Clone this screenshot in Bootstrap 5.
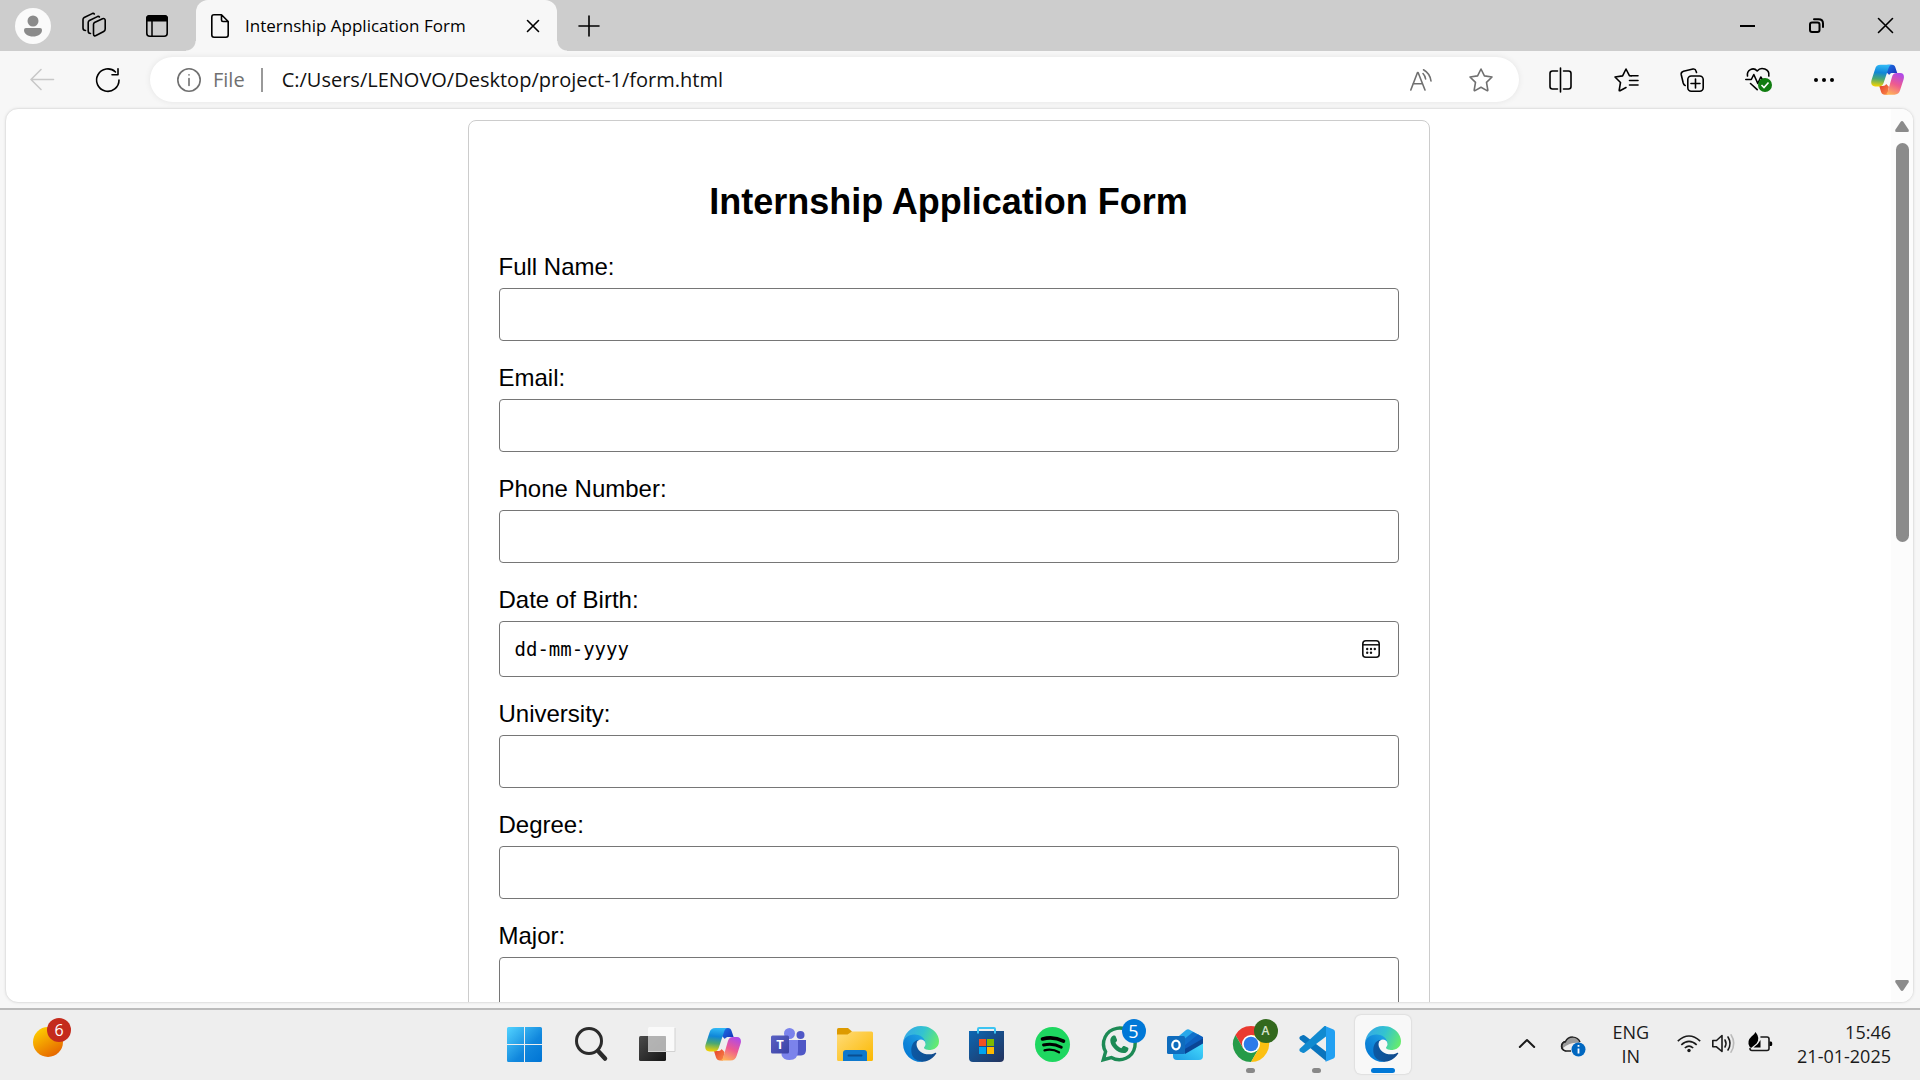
<!DOCTYPE html>
<html lang="en">
<head>
<meta charset="utf-8">
<meta name="viewport" content="width=device-width, initial-scale=1">
<title>Internship Application Form</title>
<link rel="stylesheet" href="https://cdn.jsdelivr.net/npm/bootstrap@5.3.0/dist/css/bootstrap.min.css">
<style>
  body { font-family: "Open Sans", "Noto Sans", sans-serif; background: #f7f7f7; color: #000; }
  button { border: 0; background: transparent; padding: 0; color: inherit; display: flex; align-items: center; justify-content: center; flex: none; }
  svg { display: block; overflow: visible; flex: none; }
  .ln { fill: none; stroke: currentColor; stroke-width: 1.6; stroke-linecap: round; stroke-linejoin: round; }
  .ln.bold-line { stroke-width: 2; }

  /* tab strip */
  .tabstrip { height: 51px; background: #cdcdcd; }
  .avatar { width: 36px; height: 36px; background: #fafafa; border-radius: 50%; margin: 0 11px 0 15px; }
  .strip-btn { width: 63px; height: 51px; }
  .browser-tab { width: 361px; height: 51px; margin-left: 8px; padding: 0 15px; background: #f7f7f7; border-radius: 12px 12px 0 0; position: relative; font-size: 17px; }
  .browser-tab::before, .browser-tab::after { content: ""; position: absolute; bottom: 0; width: 10px; height: 10px; }
  .browser-tab::before { left: -10px; background: radial-gradient(circle at 0 0, transparent 9px, #f7f7f7 10px); }
  .browser-tab::after { right: -10px; background: radial-gradient(circle at 100% 0, transparent 9px, #f7f7f7 10px); }
  .win-btn { width: 69px; height: 51px; }

  /* toolbar */
  .toolbar { height: 57px; padding: 0 3px 0 9px; }
  .tool-btn { width: 66px; height: 46px; }
  .tool-btn.copilot-btn { width: 60px; }
  .tool-btn.off { color: #c8c8c8; }
  .address { height: 45px; margin-left: 9px; padding-left: 27px; padding-right: 8px; background: #fff; border-radius: 23px; box-shadow: 0 0 6px rgba(0,0,0,.08); color: #707070; font-size: 20px; }
  .address-btn { width: 60px; }
  .address-split { width: 2px; height: 24px; background: #999; margin: 0 19px 0 16px; }
  .address input { border: 0; outline: 0; padding: 0; background: transparent; color: #111; font-size: 20px; }

  /* page */
  .viewport { margin: 0 6px 5px 5px; border: 1px solid #e3e3e3; border-radius: 13px; background: #fff; box-shadow: 0 0 3px rgba(0,0,0,.08); }
  .page { padding-top: 11px; font-family: "Liberation Sans", Arial, sans-serif; font-size: 24px; line-height: 28px; }
  .form-box { max-width: 962px; padding: 30px; border: 1px solid #ccc; border-radius: 8px; }
  .form-box h1 { font-size: 36px; line-height: 42px; font-weight: 700; margin: 30px 0; }
  .form-box label { display: block; margin-bottom: 7px; }
  .field { margin-bottom: 23px; }
  .field .form-control { height: 53px; padding: 12px 15px; border: 1px solid #767676; border-radius: 4px; color: #000; box-shadow: none; }
  .field .date-input { height: 56px; font-family: "DejaVu Sans Mono", monospace; font-size: 19px; }
  .date-input::placeholder { color: #000; opacity: 1; }
  .date-pick { position: absolute; right: 19px; top: 19px; }
  .scroll-rail { width: 22px; background: #fcfcfc; padding: 12px 0 11px; flex: none; }
  .scroll-thumb { width: 13px; height: 399px; border-radius: 7px; background: #8b8b8b; margin-top: 11px; }

  /* taskbar */
  .taskbar { height: 72px; border-top: 2px solid #bbb; background: #eee; display: grid; grid-template-columns: 1fr auto 1fr; padding-right: 13px; color: #1a1a1a; }
  .app { width: 66px; height: 70px; position: relative; padding-bottom: 2px; }
  .app.current::before { content: ""; position: absolute; inset: 5px 5px 6px; background: #f8f8f8; border-radius: 6px; box-shadow: 0 0 2px rgba(0,0,0,.2); }
  .app svg { position: relative; }
  .app.running::after { content: ""; position: absolute; bottom: 7px; width: 9px; height: 5px; border-radius: 3px; background: #888; }
  .app.current::after { content: ""; position: absolute; bottom: 7px; width: 24px; height: 5px; border-radius: 3px; background: #0078d7; }
  .count { position: absolute; width: 24px; height: 24px; border-radius: 50%; color: #fff; font-size: 16px; line-height: 24px; text-align: center; }
  .widget { position: relative; width: 30px; height: 30px; margin: 17px 0 0 33px; }
  .widget .count { left: 14px; top: -9px; background: #c42b1c; }
  .count.blue { left: 36px; top: 9px; background: #0078d7; font-size: 18px; }
  .count.green { left: 36px; top: 9px; background: #33691e; font-size: 12px; font-weight: 600; color: #d5e3cd; }
  .tray { padding-right: 16px; font-size: 18px; line-height: 24px; padding-bottom: 3px; }
  .tray-cloud { margin: 4px 26px 0; }
  .tray-wifi { margin: 0 11px 0 28px; }
  .tray-battery { margin: 0 24px 4px 12px; }
</style>
</head>
<body class="d-flex flex-column vh-100 overflow-hidden">

<svg width="0" height="0" class="position-absolute" aria-hidden="true">
  <defs>
    <linearGradient id="e1" x1="0" y1="0" x2="1" y2="0"><stop offset="0" stop-color="#0c59a4"/><stop offset="1" stop-color="#114a8b"/></linearGradient>
    <linearGradient id="e2" x1=".8" y1=".2" x2=".2" y2="1"><stop offset="0" stop-color="#1b9de2"/><stop offset=".5" stop-color="#0f84d8"/><stop offset="1" stop-color="#0078d4"/></linearGradient>
    <linearGradient id="e3" x1="0" y1=".3" x2="1" y2=".6"><stop offset="0" stop-color="#35a7e8"/><stop offset=".5" stop-color="#33c3d0"/><stop offset="1" stop-color="#66eb6e"/></linearGradient>
    <symbol id="edge" viewBox="0 0 256 256">
      <path fill="url(#e2)" d="M105.7 241.4A79.2 79.2 0 0 1 83 220.1 80.7 80.7 0 0 1 112.5 99.5c3.1-1.5 8.5-4.1 15.5-4a32.4 32.4 0 0 1 25.7 13 31.9 31.9 0 0 1 6.4 18.7c0-.2 24.4-79.6-80-79.6C36.2 47.6.1 89.2.1 125.8a130 130 0 0 0 12.1 56 128 128 0 0 0 156.4 67.1 75.5 75.5 0 0 1-62.8-8Z"/>
      <path fill="url(#e1)" d="M231 190.5c-3.4 1.8-6.9 3.4-10.5 4.7a102 102 0 0 1-35.9 6.4c-47.3 0-88.5-32.5-88.5-74.3a31.5 31.5 0 0 1 16.5-27.8C69.8 101.3 58.8 145.9 58.8 172c0 73.9 68.1 81.4 82.8 81.4 7.900 0 19.8-2.3 27-4.6l1.3-.4a128 128 0 0 0 66.6-52.8 4 4 0 0 0-5.5-5.1Z"/>
      <path fill="url(#e3)" d="M152.3 148.9c-.8 1-3.3 2.5-3.3 5.6 0 2.6 1.7 5.1 4.7 7.2 14.4 10 41.5 8.7 41.6 8.7a59.6 59.6 0 0 0 30.2-8.3A61.4 61.4 0 0 0 256 109.200c.3-22.4-8-37.3-11.3-43.900C223.5 23.800 177.7 0 128 0A128 128 0 0 0 0 126.2c.5-36.5 36.8-66 80-66 3.5 0 23.5.3 42 10 16.3 8.6 24.9 19 30.8 29.2 6.2 10.7 7.3 24.2 7.3 29.5s-2.7 13.4-7.8 20Z"/>
    </symbol>
    <linearGradient id="c1" x1=".4" y1="0" x2=".3" y2="1"><stop offset="0" stop-color="#30b8f5"/><stop offset=".35" stop-color="#0f86d8"/><stop offset=".65" stop-color="#4aa873"/><stop offset="1" stop-color="#f5d300"/></linearGradient>
    <linearGradient id="c2" x1=".7" y1="0" x2=".3" y2="1"><stop offset="0" stop-color="#b04ae8"/><stop offset=".5" stop-color="#ee5a90"/><stop offset="1" stop-color="#ffb357"/></linearGradient>
    <linearGradient id="c3" x1="0" y1="0" x2="1" y2="1"><stop offset="0" stop-color="#1f73e8"/><stop offset="1" stop-color="#1431b5"/></linearGradient>
    <linearGradient id="c4" x1="0" y1="0" x2="1" y2="1"><stop offset="0" stop-color="#e23c2e"/><stop offset="1" stop-color="#fb8a45"/></linearGradient>
    <symbol id="copilot" viewBox="0 0 36 36">
      <path fill="url(#c3)" d="M18 2h5c2 0 3 1 3.600 3l2 6h-5c-1.800 0-3 .6-3.700 2l-3-3Z"/>
      <path fill="url(#c4)" d="M18 34.500h-3c-2 0-3.300-1-4-3l-2-6.500h4c1.700 0 2.900-.6 3.600-2l2.900 3Z"/>
      <path fill="url(#c1)" d="M10.500 2H23c-2 0-3.200 1.500-4 4l-4.800 14.500C13.200 24 12 25.500 9 25.500H4.500C.8 25.500-.5 22.500.6 18.600L4.500 6.500C5.400 3.500 7 2 10.500 2Z"/>
      <path fill="url(#c2)" d="M25.500 34.500H14.500c2 0 3.200-1.500 4-4L22.800 15.500c1-3.200 2.300-4.600 5.200-4.600h4c3.500 0 4.600 3 3.600 6.700L31.700 29.800c-1 3.200-2.700 4.700-6.200 4.700Z"/>
    </symbol>
    <linearGradient id="w2" gradientUnits="userSpaceOnUse" x1="0" y1="0" x2="35" y2="35"><stop offset="0" stop-color="#52d3ff"/><stop offset=".6" stop-color="#1187dd"/><stop offset="1" stop-color="#0074d4"/></linearGradient>
    <linearGradient id="tv" x1="0" y1="0" x2="1" y2="1"><stop offset="0" stop-color="#4c4c4c"/><stop offset="1" stop-color="#151515"/></linearGradient>
    <linearGradient id="fx" x1="0" y1="0" x2="1" y2="1"><stop offset="0" stop-color="#ffdc7a"/><stop offset="1" stop-color="#fbb800"/></linearGradient>
    <linearGradient id="st" x1="0" y1="0" x2="1" y2="1"><stop offset="0" stop-color="#0c67b3"/><stop offset="1" stop-color="#24325c"/></linearGradient>
    <linearGradient id="wd" x1=".2" y1="0" x2=".8" y2="1"><stop offset="0" stop-color="#ffd100"/><stop offset="1" stop-color="#e45f00"/></linearGradient>
    <linearGradient id="ol" x1="0" y1="1" x2="1" y2="0"><stop offset="0" stop-color="#1a9be5"/><stop offset="1" stop-color="#4be1ff"/></linearGradient>
    <linearGradient id="tm" x1="0" y1="0" x2="1" y2="1"><stop offset="0" stop-color="#5a62c3"/><stop offset="1" stop-color="#3a41a5"/></linearGradient>
  </defs>
</svg>

<header class="tabstrip d-flex align-items-center flex-shrink-0">
  <button class="avatar" aria-label="Profile"><svg width="18" height="22" viewBox="0 0 18 22" fill="#8b8b8b"><circle cx="9" cy="6" r="5.500"/><path d="M2 13h14q2 0 2 2c0 4-4 6.500-9 6.500S0 19 0 15q0-2 2-2Z"/></svg></button>
  <button class="strip-btn" aria-label="Workspaces"><svg class="ln" width="24" height="25" viewBox="0 0 24 25"><path d="M12.500 9.500 20.500 5.700Q23.200 5 23.200 7.500V16q0 1.700-1.500 2.500l-7.200 3.700Q11.500 24 11.500 20.800V11.500q0-1.300 1-2ZM8.500 20.500Q6.200 20.500 6.200 18V9.500q0-1.300 1.200-2l8-3.900q1.400-.6 2 .4M3.500 17.500Q1 17.500 1 15V6.500q0-1.300 1.200-2l8-3.900Q11.600 0 12.300 1"/></svg></button>
  <button class="strip-btn" aria-label="Tab actions"><svg width="22" height="22" viewBox="0 0 22 22"><rect class="ln" x=".8" y=".8" width="20.400" height="20.400" rx="3"/><path d="M0 6.500V3.500Q0 0 3.500 0h15Q22 0 22 3.500v3Z"/><path d="M6 6v15" stroke="#000" stroke-width="1.500"/></svg></button>
  <div class="browser-tab d-flex align-items-center">
    <svg class="ln" width="18" height="24" viewBox="0 0 18 24"><path d="M3 .8h7.500L17.200 7.500V21q0 2.200-2.200 2.200H3Q.8 23.200.8 21V3Q.8.8 3 .8ZM10.500.8V6q0 1.500 1.500 1.500h5.200"/></svg>
    <span class="flex-grow-1 text-nowrap ps-3">Internship Application Form</span>
    <button aria-label="Close tab"><svg class="ln" width="18" height="12" viewBox="0 0 18 12"><path d="m3.500.5 11 11M14.500.5l-11 11"/></svg></button>
  </div>
  <button class="strip-btn" aria-label="New tab"><svg class="ln" width="22" height="22" viewBox="0 0 22 22"><path d="M11 1v20M1 11h20"/></svg></button>
  <div class="d-flex ms-auto">
    <button class="win-btn" aria-label="Minimize"><svg width="15" height="2"><path d="M0 1h15" stroke="#000" stroke-width="2"/></svg></button>
    <button class="win-btn" aria-label="Restore"><svg class="ln bold-line" width="15" height="15" viewBox="0 0 15 15"><rect x="1" y="4.500" width="9.500" height="9.500" rx="2"/><path d="M5 1.200H9.500Q14 1.200 14 5.500V9"/></svg></button>
    <button class="win-btn" aria-label="Close"><svg class="ln" width="15" height="15" viewBox="0 0 15 15"><path d="m.5.5 14 14M14.500.5l-14 14"/></svg></button>
  </div>
</header>

<nav class="toolbar d-flex align-items-center flex-shrink-0">
  <button class="tool-btn off" aria-label="Back" disabled><svg class="ln" width="24" height="21" viewBox="0 0 24 21"><path d="M23.500 10.500H1M11 .5l-10 10 10 10"/></svg></button>
  <button class="tool-btn" aria-label="Refresh"><svg class="ln" width="24" height="24" viewBox="0 0 24 24"><path d="M23 12A11.200 11.200 0 1 1 19.500 4M22 .8V6.800H16"/></svg></button>
  <div class="address d-flex align-items-center flex-grow-1">
    <svg class="ln" width="24" height="24" viewBox="0 0 24 24"><circle cx="12" cy="12" r="11.200"/><path d="M12 10.500v7M12 6.800v.2"/></svg>
    <label for="url" class="ps-2 ms-1">File</label>
    <span class="address-split"></span>
    <input id="url" class="flex-grow-1" type="text" value="C:/Users/LENOVO/Desktop/project-1/form.html">
    <button class="address-btn" aria-label="Read aloud"><svg class="ln" width="22" height="22" viewBox="0 0 22 22"><path d="M.8 21 7.500 3.500h.6L15 21M3 14.800h9.600M13 4.500q2.200 2.300 2.600 5.500M13.500.8Q20 4.500 21 12"/></svg></button>
    <button class="address-btn" aria-label="Favorite"><svg class="ln" width="24" height="24" viewBox="0 0 24 24"><path d="m12 1 3.400 6.900 7.600 1.100-5.500 5.400 1.300 7.600q.1 1-.8.600L12 19.300l-6 3.300q-.9.400-.8-.6l1.300-7.600L1 9l7.600-1.100Z"/></svg></button>
  </div>
  <div class="d-flex ms-2">
    <button class="tool-btn" aria-label="Split screen"><svg class="ln" width="23" height="24" viewBox="0 0 23 24"><path d="M8.500 3H3.500Q1 3 1 5.500v13Q1 21 3.500 21h5M14.500 3h5Q22 3 22 5.500v13Q22 21 19.500 21h-5M11.500 0v24"/></svg></button>
    <button class="tool-btn" aria-label="Favorites"><svg class="ln" width="24" height="24" viewBox="0 0 24 24"><path d="M12 19.500 6 22.700q-.9.400-.8-.6l1.300-7.600L1 9l7.600-1.100L12 1l3.400 6.600 2 .4M15.500 12.500H24M15.500 17H24M17.500 7.800H24"/></svg></button>
    <button class="tool-btn" aria-label="Collections"><svg class="ln" width="24" height="24" viewBox="0 0 24 24"><rect x="7.800" y="8" width="15.400" height="15.200" rx="3.500"/><path d="M15.500 11v9M11 15.500h9M16.500 4.500 16 3Q15.500.6 13 1L3.500 3.200Q.8 4 1.200 6.500l2 8.500q.6 2 2 2.500"/></svg></button>
    <button class="tool-btn" aria-label="Browser essentials"><svg width="27" height="25" viewBox="0 0 27 25"><path class="ln" d="M2.500 9C1.500 3.500 8-.8 12.200 4 16-.8 25 2 23.800 9M.8 12.500h5.500l2.500-5 4 9 3-6.500 1.500 2.500h2M5.500 16.500l6.700 6.200"/><circle cx="20" cy="18" r="7" fill="#107c10"/><path d="m16.500 18 2.500 2.500 4.500-5" fill="none" stroke="#fff" stroke-width="1.600"/></svg></button>
    <button class="tool-btn" aria-label="Settings and more"><svg width="20" height="4" viewBox="0 0 20 4"><circle cx="2" cy="2" r="2"/><circle cx="10" cy="2" r="2"/><circle cx="18" cy="2" r="2"/></svg></button>
    <button class="tool-btn copilot-btn" aria-label="Copilot"><svg width="33" height="33"><use href="#copilot"/></svg></button>
  </div>
</nav>

<main class="viewport d-flex flex-grow-1 overflow-hidden">
  <div class="page flex-grow-1 overflow-hidden">
    <form class="form-box mx-auto">
      <h1 class="text-center">Internship Application Form</h1>
      <div class="field"><label for="name">Full Name:</label><input class="form-control" type="text" id="name"></div>
      <div class="field"><label for="email">Email:</label><input class="form-control" type="email" id="email"></div>
      <div class="field"><label for="phone">Phone Number:</label><input class="form-control" type="tel" id="phone"></div>
      <div class="field"><label for="dob">Date of Birth:</label>
        <div class="position-relative">
          <input class="form-control date-input" type="text" id="dob" placeholder="dd-mm-yyyy">
          <button type="button" class="date-pick" aria-label="Show date picker"><svg width="18" height="18" viewBox="0 0 18 18"><rect x=".8" y=".8" width="16.400" height="16.400" rx="3" fill="none" stroke="#111" stroke-width="1.600"/><path d="M1 4.800h16" stroke="#111" stroke-width="1.500"/><g fill="#111"><circle cx="5.200" cy="9" r="1.200"/><circle cx="9" cy="9" r="1.200"/><circle cx="12.800" cy="9" r="1.200"/><circle cx="5.200" cy="12.800" r="1.200"/><circle cx="9" cy="12.800" r="1.200"/></g></svg></button>
        </div>
      </div>
      <div class="field"><label for="uni">University:</label><input class="form-control" type="text" id="uni"></div>
      <div class="field"><label for="degree">Degree:</label><input class="form-control" type="text" id="degree"></div>
      <div class="field"><label for="major">Major:</label><input class="form-control" type="text" id="major"></div>
    </form>
  </div>
  <div class="scroll-rail d-flex flex-column align-items-center">
    <svg width="14" height="11" viewBox="0 0 14 11"><path fill="#8b8b8b" d="M5.500 1q1.500-1.800 3 0l5 7.500q1 2.500-1 2.500h-11q-2 0-1-2.500Z"/></svg>
    <div class="scroll-thumb"></div>
    <svg class="mt-auto" width="14" height="11" viewBox="0 0 14 11"><path fill="#8b8b8b" d="M5.500 10q1.500 1.800 3 0l5-7.500q1-2.500-1-2.500h-11q-2 0-1 2.500Z"/></svg>
  </div>
</main>

<footer class="taskbar flex-shrink-0">
  <div>
    <button class="widget" aria-label="Widgets"><svg width="30" height="30"><circle cx="15" cy="15" r="15" fill="url(#wd)"/></svg><span class="count">6</span></button>
  </div>
  <div class="d-flex">
    <button class="app" aria-label="Start"><svg width="35" height="35" viewBox="0 0 35 35" fill="url(#w2)"><path d="M1.500 0H17v17H0V1.500Q0 0 1.500 0ZM18 0h15.500Q35 0 35 1.500V17H18ZM0 18h17v17H1.500Q0 35 0 33.500ZM18 18h17v15.500q0 1.500-1.500 1.500H18Z"/></svg></button>
    <button class="app" aria-label="Search"><svg width="32" height="34" viewBox="0 0 32 34" fill="none" stroke="#2b2b2b" stroke-linecap="round"><circle cx="14" cy="14" r="12.500" stroke-width="3"/><path d="m24 25 6 6.500" stroke-width="4.500"/></svg></button>
    <button class="app" aria-label="Task view"><svg width="36" height="34" viewBox="0 0 36 34"><rect y="9" width="27" height="25" rx="1.500" fill="url(#tv)"/><rect x="9" width="27" height="25" rx="1.500" fill="#fff" fill-opacity=".72"/><path d="M9 9h18v16H9Z" fill="#a5a5a5" fill-opacity=".6"/><path d="M36 1v23.500H9" fill="none" stroke="#d2d2d2"/></svg></button>
    <button class="app" aria-label="Copilot"><svg width="36" height="36"><use href="#copilot"/></svg></button>
    <button class="app" aria-label="Teams"><svg width="36" height="32" viewBox="0 0 36 32"><circle cx="29.500" cy="7" r="4" fill="#4f57c6"/><path fill="#4f57c6" d="M26 12h9v10q0 5-5 5.500h-4Z"/><circle cx="18.500" cy="5.500" r="5.500" fill="#7b83eb"/><path fill="#7b83eb" d="M12 12h15v11q0 9-8.500 9-6.500 0-8-5Z"/><rect y="7.500" width="18" height="18" rx="1.500" fill="url(#tm)"/><text x="9" y="21" fill="#fff" font-size="13" font-weight="700" text-anchor="middle">T</text></svg></button>
    <button class="app" aria-label="File Explorer"><svg width="36" height="33" viewBox="0 0 36 33"><path fill="#dd9a00" d="M1.500 0H11l4 3.500L12 7H0V1.500Q0 0 1.500 0Z"/><path fill="url(#fx)" d="M0 6.500h10.500L15 3.500h19.500Q36 3.500 36 5v26.500q0 1.500-1.500 1.500h-33Q0 33 0 31.500Z"/><path fill="#0f78cc" d="M6 33V25q0-3 3-3h18q3 0 3 3v8Z"/><rect x="10.500" y="26.500" width="15" height="2" rx="1" fill="#0a4f92"/></svg></button>
    <button class="app" aria-label="Edge"><svg width="36" height="36"><use href="#edge"/></svg></button>
    <button class="app" aria-label="Store"><svg width="35" height="35" viewBox="0 0 35 35"><path fill="none" stroke="#3cc4f2" stroke-width="2" d="M9 6.500V2q0-1 1-1h15q1 0 1 1v4.500"/><path fill="url(#st)" d="M0 4h35v27q0 4-4 4H4q-4 0-4-4Z"/><path fill="none" stroke="#3cc4f2" stroke-width="2" d="M9 6.500V3M26 6.500V3"/><path fill="#f25022" d="M10 12h7v7h-7z"/><path fill="#7fba00" d="M18 12h7v7h-7z"/><path fill="#00a4ef" d="M10 20h7v7h-7z"/><path fill="#ffb900" d="M18 20h7v7h-7z"/></svg></button>
    <button class="app" aria-label="Spotify"><svg width="35" height="35" viewBox="0 0 35 35"><circle cx="17.500" cy="17.500" r="17.500" fill="#1ed760"/><path fill="none" stroke="#000" stroke-linecap="round" d="M7.500 12q11-3 21 2.200" stroke-width="3.600"/><path fill="none" stroke="#000" stroke-linecap="round" d="M8.500 18q9.500-2.400 17.800 2.200" stroke-width="2.900"/><path fill="none" stroke="#000" stroke-linecap="round" d="M9.500 23.300q8-1.800 14.500 2" stroke-width="2.300"/></svg></button>
    <button class="app" aria-label="WhatsApp"><svg width="36" height="36" viewBox="0 0 36 36"><path fill="none" stroke="#1d8a55" stroke-width="3.400" d="M2.300 33.700 4.600 25.700A15.800 15.800 0 1 1 10.300 31.500Z"/><path fill="#1d8a55" d="M13.200 9.500c.8 0 1.200.3 1.500 1l1.300 3.300c.2.600 0 1-.3 1.400l-1.300 1.600c1.300 2.400 3.200 4.200 5.900 5.400l1.700-1.900c.4-.5.800-.5 1.300-.3l3.300 1.600c.6.300.9.600.8 1.300-.3 2.600-2.400 4.200-4.800 4.200-6 0-13.300-6.800-13.300-12.600 0-2.300 1.500-5 3.900-5Z"/></svg><span class="count blue">5</span></button>
    <button class="app" aria-label="Outlook"><svg width="36" height="31" viewBox="0 0 36 31"><path fill="#28a8ea" d="M6 12 19 1q2-1.500 4 0l11 6 2 3v15H6Z"/><path fill="#1070cb" d="M10 16 26 3l6 3-16 16Z"/><path fill="url(#ol)" d="M16 24 36 12v15q0 4-4 4H10q-4 0-4-4v-3Z"/><path fill="#0d5fbe" d="M17 17 31 5.500 36 8v3L18 22Z"/><path fill="#0a4595" d="m17 20.500 19-11v5L18 25Z"/><rect y="7" width="18" height="18" rx="1.500" fill="#0f6cbd"/><ellipse cx="9" cy="16" rx="3.700" ry="4.300" fill="none" stroke="#fff" stroke-width="2.300"/></svg></button>
    <button class="app running" aria-label="Chrome"><svg width="36" height="36" viewBox="0 0 36 36"><path fill="#ea3a30" d="M2.400 9A18 18 0 0 1 33.600 9H18l-7.800 13.500Z"/><path fill="#259b48" d="M2.400 9A18 18 0 0 0 18 36l7.800-13.500H10.200Z"/><path fill="#fcc012" d="M18 36A18 18 0 0 0 33.600 9H18l7.800 13.500Z"/><circle cx="18" cy="18" r="9" fill="#fff"/><circle cx="18" cy="18" r="7.300" fill="#2c7bea"/></svg><span class="count green">A</span></button>
    <button class="app running" aria-label="Visual Studio Code"><svg width="36" height="36" viewBox="0 0 36 36"><path fill="#0a74bd" d="M1 10.500 4 9q1-.2 1.800.4L27 25.500V35L1 13.500Q-.5 12 1 10.500Z"/><path fill="#118ad0" d="M1 25.500 4 27q1 .2 1.800-.4L27 10.500V0h-1.500L1 22.500Q-.5 24 1 25.500Z"/><path fill="#22a0f2" d="m26 0 8.500 3.500Q36 4.200 36 6v24q0 1.800-1.500 2.500L26 36q1-.5 1-2V2q0-1.500-1-2Z"/></svg></button>
    <button class="app current" aria-label="Edge, active window"><svg width="36" height="36"><use href="#edge"/></svg></button>
  </div>
  <div class="tray d-flex align-items-center justify-content-end text-nowrap">
    <svg class="ln bold-line" width="16" height="9" viewBox="0 0 16 9"><path d="m.8 8 7.200-7 7.200 7"/></svg>
    <svg class="tray-cloud" width="25" height="22" viewBox="0 0 25 22"><path fill="#9b9b9b" stroke="#222" stroke-width="1.500" d="M5.500 16A4.800 4.800 0 0 1 4.500 6.500 8 8 0 0 1 19 7"/><path fill="#eee" d="M2 13q7-6 17-5l-7 9H6Z"/><path fill="none" stroke="#222" stroke-width="1.500" d="M5 6.500A4.700 4.700 0 0 0 5.500 16H10"/><circle cx="17.500" cy="14.500" r="7" fill="#0067c0"/><path d="M17.500 13.500v5M17.500 10v1.800" stroke="#fff" stroke-width="1.800"/></svg>
    <span class="text-center">ENG<br>IN</span>
    <svg class="tray-wifi" width="24" height="18" viewBox="0 0 24 18" fill="none" stroke="#1a1a1a" stroke-width="1.600"><path d="M.8 6.200q11.200-10.400 22.400 0M4.300 9.800q7.700-7 15.400 0M7.800 13q4.200-3.800 8.400 0"/><circle cx="12" cy="15.500" r="1.700" fill="#1a1a1a" stroke="none"/></svg>
    <svg class="ln" width="24" height="19" viewBox="0 0 24 19"><path d="M.8 6.500H4.500L10 1.500v16L4.500 12.800H.8ZM13 6q2 3.500 0 7M16 3q4 6.500 0 13"/><path stroke="#bbb" d="M19 .8q5.500 8.500 0 17.400"/></svg>
    <svg class="tray-battery" width="25" height="20" viewBox="0 0 25 20"><path class="ln" d="M13 5h6q2 0 2 2v9.500q0 2-2 2H4q-2 0-2-2"/><path d="M21.500 9.500h1.500q1.200 0 1.200 1.500v1.500q0 1.500-1.200 1.500h-1.500Z"/><path d="M7.500 0Q12.500 6 8.500 11.500L3 16 1.500 14.500q-3-5.500 2-10Q6.500 2.500 7.500 0ZM12.500 8v7.500H5.500Q10 13 12.500 8Z"/></svg>
    <span class="text-end">15:46<br>21-01-2025</span>
  </div>
</footer>
<script src="https://cdn.jsdelivr.net/npm/bootstrap@5.3.0/dist/js/bootstrap.bundle.min.js"></script>
</body>
</html>
